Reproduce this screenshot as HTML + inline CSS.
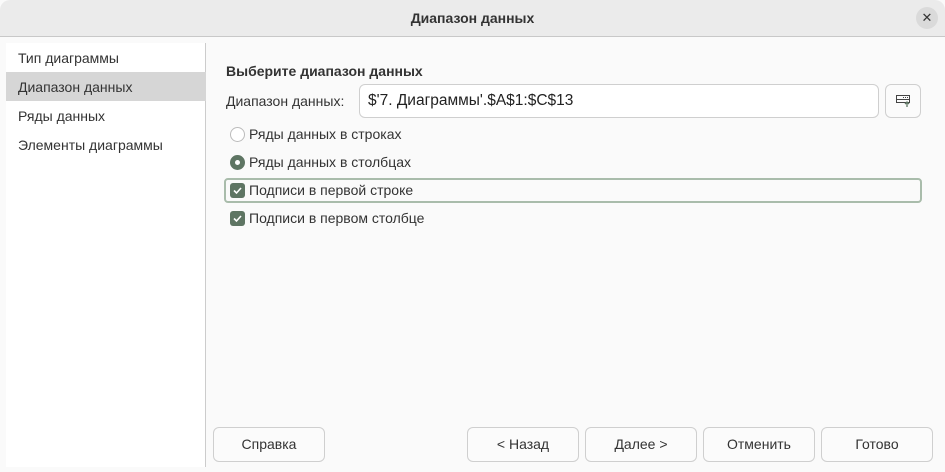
<!DOCTYPE html>
<html><head><meta charset="utf-8"><style>
*{box-sizing:border-box;margin:0;padding:0}
body{width:945px;height:472px;overflow:hidden;background:#fafafa;font-family:"Liberation Sans","DejaVu Sans",sans-serif;font-size:14px;color:#333;position:relative}
.t{position:absolute;white-space:nowrap}
.title{position:absolute;left:0;top:0;width:945px;height:37px;background:#ebebeb;border-bottom:1px solid #c8c8c8;border-radius:10px 10px 0 0;text-align:center;line-height:36px;font-weight:bold;font-size:14px;color:#333}
.close{position:absolute;left:916px;top:7px;width:22px;height:22px;border-radius:50%;background:#dadada;text-align:center;line-height:22px;font-size:13px;color:#333}
.side{position:absolute;left:6px;top:43px;width:200px;height:424px;background:#fff;border-right:1px solid #ccc}
.sel{position:absolute;left:6px;top:72px;width:200px;height:29px;background:#d6d6d6}
.btn{position:absolute;top:427px;height:35px;border:1px solid #cfcfcf;border-radius:6px;background:#fbfbfb;text-align:center;line-height:33px;font-size:14px;color:#333}
.cb{position:absolute;left:230px;width:15px;height:15px;border-radius:3px;background:#5e7563}
.rb{position:absolute;left:230px;width:15px;height:15px;border-radius:50%}
</style></head><body>
<div class="title">Диапазон данных</div>
<div class="close">✕</div>
<div class="side"></div>
<div class="sel"></div>
<div class="t" style="left:18px;top:50px">Тип диаграммы</div>
<div class="t" style="left:18px;top:79px">Диапазон данных</div>
<div class="t" style="left:18px;top:108px">Ряды данных</div>
<div class="t" style="left:18px;top:137px">Элементы диаграммы</div>
<div class="t" style="left:226px;top:63px;font-weight:bold">Выберите диапазон данных</div>
<div class="t" style="left:226px;top:93px">Диапазон данных:</div>
<div style="position:absolute;left:359px;top:84px;width:520px;height:34px;background:#fff;border:1px solid #cfcfcf;border-radius:6px"></div>
<div class="t" style="left:368px;top:92px;color:#222;font-size:15.5px">$'7. Диаграммы'.$A$1:$C$13</div>
<div style="position:absolute;left:885px;top:84px;width:36px;height:34px;background:#fbfbfb;border:1px solid #cfcfcf;border-radius:6px"></div>
<svg style="position:absolute;left:895px;top:93px" width="16" height="16" viewBox="0 0 16 16"><rect x="1.5" y="2.5" width="13" height="7" fill="none" stroke="#444"/><line x1="1.5" y1="6.5" x2="14.5" y2="6.5" stroke="#444"/><path d="M8 4.5h1M10 4.5h1M12 4.5h1" stroke="#444"/><path d="M12 14V9M10 11l2-2 2 2" stroke="#5e7563" stroke-width="1.3" fill="none"/></svg>
<div class="rb" style="top:127px;border:1px solid #bbb;background:#fff"></div>
<div class="t" style="left:249px;top:126px">Ряды данных в строках</div>
<div class="rb" style="top:155px;background:#5e7563"><div style="position:absolute;left:5px;top:5px;width:5px;height:5px;border-radius:50%;background:#fff"></div></div>
<div class="t" style="left:249px;top:154px">Ряды данных в столбцах</div>
<div style="position:absolute;left:224px;top:178px;width:698px;height:25px;border:2px solid #a9bcab;border-radius:4px"></div>
<div class="cb" style="top:183px"></div>
<svg style="position:absolute;left:230px;top:183px" width="15" height="15"><path d="M4 7.5l2.5 2.5 4.5-5" stroke="#fff" stroke-width="1.6" fill="none"/></svg>
<div class="t" style="left:249px;top:182px">Подписи в первой строке</div>
<div class="cb" style="top:211px"></div>
<svg style="position:absolute;left:230px;top:211px" width="15" height="15"><path d="M4 7.5l2.5 2.5 4.5-5" stroke="#fff" stroke-width="1.6" fill="none"/></svg>
<div class="t" style="left:249px;top:210px">Подписи в первом столбце</div>
<div class="btn" style="left:213px;width:112px">Справка</div>
<div class="btn" style="left:467px;width:112px">&lt; Назад</div>
<div class="btn" style="left:585px;width:112px">Далее &gt;</div>
<div class="btn" style="left:703px;width:112px">Отменить</div>
<div class="btn" style="left:821px;width:112px">Готово</div>
</body></html>
